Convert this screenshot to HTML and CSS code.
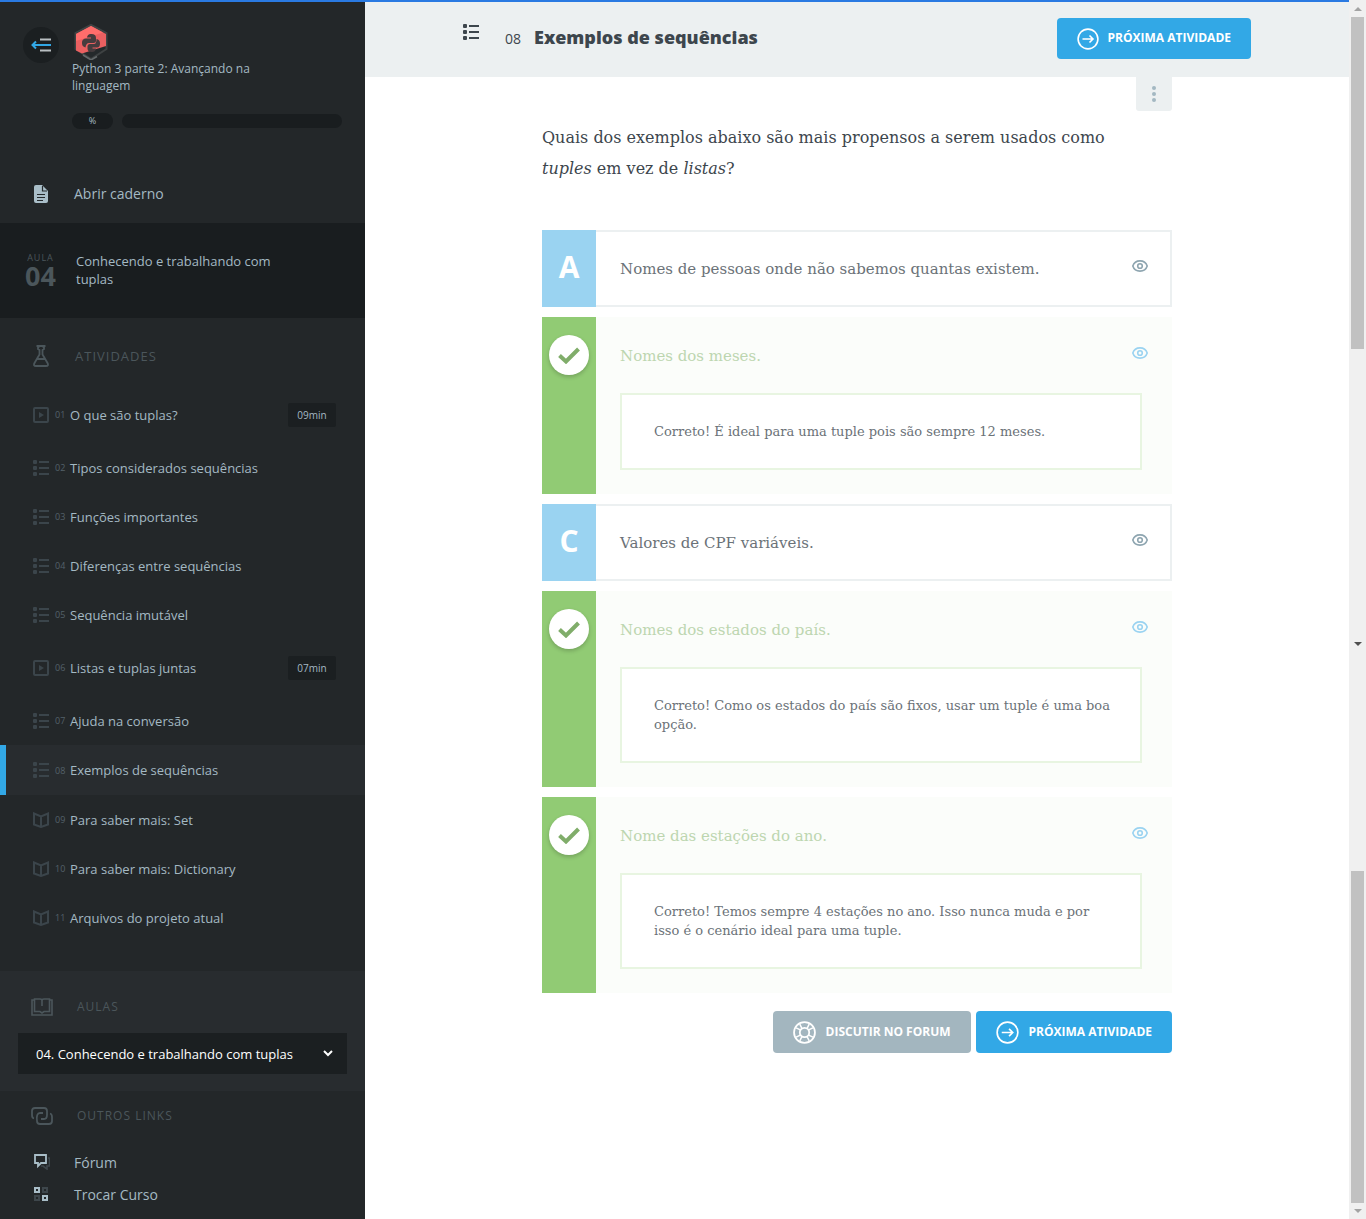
FILE: index.html
```html
<!DOCTYPE html>
<html lang="pt-BR">
<head>
<meta charset="utf-8">
<title>Exemplos de sequências</title>
<link rel="stylesheet" href="styles.css">
</head>
<body>
<svg class="sprite" aria-hidden="true">
  <symbol id="i-list" viewBox="0 0 16 16"><rect width="4" height="4" rx="1"/><rect y="6" width="4" height="4" rx="1"/><rect y="12" width="4" height="4" rx="1"/><rect x="6" y="1" width="10" height="2"/><rect x="6" y="7" width="10" height="2"/><rect x="6" y="13" width="10" height="2"/></symbol>
  <symbol id="i-video" viewBox="0 0 16 16"><rect x="1" y="1" width="14" height="14" rx="1" fill="none" stroke="currentColor" stroke-width="2"/><path d="M6 5l5 3-5 3z"/></symbol>
  <symbol id="i-book" viewBox="0 0 16 16"><path d="M1 1.500L8 4.500L15 1.500V12.500L8 15L1 12.500ZM8 4.500V15" fill="none" stroke="currentColor" stroke-width="2"/></symbol>
  <symbol id="i-eye" viewBox="0 0 16 12"><path d="M.8 6C3-.8 13-.8 15.200 6C13 12.800 3 12.800 .8 6Z" fill="none" stroke="currentColor" stroke-width="1.600"/><circle cx="8" cy="6" r="2.300" fill="none" stroke="currentColor" stroke-width="1.600"/></symbol>
  <symbol id="i-next" viewBox="0 0 22 22"><circle cx="11" cy="11" r="9.900" fill="none" stroke="currentColor" stroke-width="1.600"/><path d="M5.500 11H16M12.500 7.500L16 11L12.500 14.500" fill="none" stroke="currentColor" stroke-width="1.600"/></symbol>
  <symbol id="i-buoy" viewBox="0 0 22 22"><g fill="none" stroke="currentColor" stroke-width="1.700"><circle cx="11" cy="11" r="10"/><circle cx="11" cy="11" r="4.500"/><path d="M3 6.500L7 8.500M6.500 3L8.500 7M19 6.500L15 8.500M15.500 3L13.500 7M3 15.500L7 13.500M6.500 19L8.500 15M19 15.500L15 13.500M15.500 19L13.500 15" stroke-width="1.400"/></g></symbol>
  <symbol id="i-check" viewBox="0 0 22 17"><path d="M1.500 8.500L8 14.500L20.500 2" fill="none" stroke="currentColor" stroke-width="4"/></symbol>
</svg>

<div class="app">
  <div class="loading-bar"></div>
  <aside class="sidebar">
    <header class="course">
      <button class="collapse" aria-label="Recolher menu">
        <svg width="20" height="14" viewBox="0 0 20 14"><path d="M9 1.500H20M9 12.500H20" stroke="#b9bfc2" stroke-width="2"/><path d="M1 7H20M5 3.500L1.500 7L5 10.500" fill="none" stroke="#32a8e6" stroke-width="2"/></svg>
      </button>
      <div class="course-info">
        <svg class="course-logo" width="38" height="38" viewBox="0 0 38 38"><path d="M19 3L34.500 11V27L19 37L3.500 27V11Z" fill="#24292b" stroke="#3e4243" stroke-width="2"/><path d="M19 4L34 12V24L10 31.500L4 28.500V12Z" fill="#ea6061"/><path d="M19 4L31 10.500L4 19V12Z" fill="#ff6d6b"/><path d="M11 33L19 38L25 34.500" fill="none" stroke="#63696b" stroke-width="1.500"/><g fill="#453c3e"><path d="M13.500 25.500Q9.500 24.500 10 20Q10.500 16.500 14 16.500H19V15.500H15Q15.500 11.500 19.500 12Q24 12 24 16V18.500Q24 21 21.500 21H17Q14 21 13.500 25.500Z"/><path d="M24.500 17Q28 17.500 28 21.500Q28 25.500 25 25.500H20.500V26.500H24Q23.500 30 20 30Q15.500 30 15.500 26.500V24.500Q15.500 22 18 22H22Q24.500 22 24.500 17Z"/></g></svg>
        <a href="#" class="course-name">Python 3 parte 2: Avançando na linguagem</a>
        <div class="progress"><span class="percent">%</span><span class="track"></span></div>
      </div>
    </header>
    <a href="#" class="notebook">
      <svg width="14" height="18" viewBox="0 0 14 18"><path d="M0 2Q0 0 2 0H8L14 6V16Q14 18 12 18H2Q0 18 0 16Z" fill="#a9bec8"/><path d="M8.500 1V6H13M3 9.500H11M3 12.500H11M3 15.500H9" fill="none" stroke="#24292b" stroke-width="1.200"/></svg>
      <span>Abrir caderno</span>
    </a>
    <section class="lesson">
      <div class="lesson-number"><span>AULA</span><strong>04</strong></div>
      <h2>Conhecendo e trabalhando com tuplas</h2>
    </section>
    <nav class="activities">
      <h3 class="section-title"><svg width="16" height="22" viewBox="0 0 16 22"><path d="M3.500 1H12.500M5.500 1V3M10.500 1V3M5 1V4L6.500 5V9.500L1.500 18Q0 21 3 21H13Q16 21 14.500 18L9.500 9.500V5L11 4V1M4.500 14H11.500" fill="none" stroke="currentColor" stroke-width="1.800"/></svg><span>ATIVIDADES</span></h3>
      <ul>
        <li class="timed"><a href="#"><svg class="icon"><use href="#i-video"/></svg><small>01</small><span>O que são tuplas?</span><time>09min</time></a></li>
        <li><a href="#"><svg class="icon"><use href="#i-list"/></svg><small>02</small><span>Tipos considerados sequências</span></a></li>
        <li><a href="#"><svg class="icon"><use href="#i-list"/></svg><small>03</small><span>Funções importantes</span></a></li>
        <li><a href="#"><svg class="icon"><use href="#i-list"/></svg><small>04</small><span>Diferenças entre sequências</span></a></li>
        <li><a href="#"><svg class="icon"><use href="#i-list"/></svg><small>05</small><span>Sequência imutável</span></a></li>
        <li class="timed"><a href="#"><svg class="icon"><use href="#i-video"/></svg><small>06</small><span>Listas e tuplas juntas</span><time>07min</time></a></li>
        <li><a href="#"><svg class="icon"><use href="#i-list"/></svg><small>07</small><span>Ajuda na conversão</span></a></li>
        <li class="active"><a href="#" aria-current="page"><svg class="icon"><use href="#i-list"/></svg><small>08</small><span>Exemplos de sequências</span></a></li>
        <li><a href="#"><svg class="icon"><use href="#i-book"/></svg><small>09</small><span>Para saber mais: Set</span></a></li>
        <li><a href="#"><svg class="icon"><use href="#i-book"/></svg><small>10</small><span>Para saber mais: Dictionary</span></a></li>
        <li><a href="#"><svg class="icon"><use href="#i-book"/></svg><small>11</small><span>Arquivos do projeto atual</span></a></li>
      </ul>
    </nav>
    <section class="lessons">
      <label class="section-title" for="lesson"><svg width="22" height="18" viewBox="0 0 22 18"><path d="M3 2H1V17H21V2H19M3.500 1H9Q11 1 11 2.500Q11 1 13 1H18.500V13.500H13L11 15L9 13.500H3.500ZM11 2V8" fill="none" stroke="currentColor" stroke-width="1.600"/></svg><span>AULAS</span></label>
      <div class="select">
        <select id="lesson"><option>04. Conhecendo e trabalhando com tuplas</option></select>
        <svg width="10" height="7" viewBox="0 0 10 7"><path d="M1 1L5 5L9 1" fill="none" stroke="#fff" stroke-width="2"/></svg>
      </div>
    </section>
    <nav class="links">
      <h3 class="section-title"><svg width="22" height="18" viewBox="0 0 22 18"><path d="M3 11.500Q1 11 1 8V4Q1 1 4 1H13Q16 1 16 4V8Q16 12 13 12H10M6 14Q5 6 9 6H12M19 6.500Q21 7 21 10V14Q21 17 18 17H9Q6 17 6 14" fill="none" stroke="currentColor" stroke-width="1.800"/></svg><span>OUTROS LINKS</span></h3>
      <a href="#"><svg width="16" height="16" viewBox="0 0 16 16"><path d="M1 1H12V9H7L4 12V9H1Z" fill="none" stroke="#a9bec8" stroke-width="1.800"/><path d="M14 4H15.500V12H13V15L9 12H7" fill="none" stroke="#3e474c" stroke-width="1.600"/></svg><span>Fórum</span></a>
      <a href="#"><svg width="16" height="16" viewBox="0 0 16 16"><path d="M1 2H5V6H1ZM9 10H13V14H9Z" fill="none" stroke="#a9bec8" stroke-width="2"/><path d="M9 2H13V6H9ZM1 10H5V14H1Z" fill="none" stroke="#3e474c" stroke-width="2"/></svg><span>Trocar Curso</span></a>
    </nav>
  </aside>

  <main class="page">
    <header class="topbar">
      <div class="topbar-inner">
        <svg class="icon"><use href="#i-list"/></svg>
        <span class="number">08</span>
        <h1>Exemplos de sequências</h1>
        <a href="#" class="btn primary"><svg><use href="#i-next"/></svg><span>PRÓXIMA ATIVIDADE</span></a>
      </div>
    </header>
    <div class="content">
      <button class="more" aria-label="Mais opções"><i></i><i></i><i></i></button>
      <p class="question">Quais dos exemplos abaixo são mais propensos a serem usados como <em>tuples</em> em vez de <em>listas</em>?</p>
      <ol class="options">
        <li class="option">
          <button class="mark">A</button>
          <div class="body"><div class="answer"><p>Nomes de pessoas onde não sabemos quantas existem.</p><button class="eye" aria-label="Ver opinião"><svg><use href="#i-eye"/></svg></button></div></div>
        </li>
        <li class="option correct">
          <button class="mark" aria-label="B, correta"><span class="check"><svg><use href="#i-check"/></svg></span></button>
          <div class="body"><div class="answer"><p>Nomes dos meses.</p><button class="eye" aria-label="Ver opinião"><svg><use href="#i-eye"/></svg></button></div><p class="feedback">Correto! É ideal para uma tuple pois são sempre 12 meses.</p></div>
        </li>
        <li class="option">
          <button class="mark">C</button>
          <div class="body"><div class="answer"><p>Valores de CPF variáveis.</p><button class="eye" aria-label="Ver opinião"><svg><use href="#i-eye"/></svg></button></div></div>
        </li>
        <li class="option correct">
          <button class="mark" aria-label="D, correta"><span class="check"><svg><use href="#i-check"/></svg></span></button>
          <div class="body"><div class="answer"><p>Nomes dos estados do país.</p><button class="eye" aria-label="Ver opinião"><svg><use href="#i-eye"/></svg></button></div><p class="feedback">Correto! Como os estados do país são fixos, usar um tuple é uma boa opção.</p></div>
        </li>
        <li class="option correct">
          <button class="mark" aria-label="E, correta"><span class="check"><svg><use href="#i-check"/></svg></span></button>
          <div class="body"><div class="answer"><p>Nome das estações do ano.</p><button class="eye" aria-label="Ver opinião"><svg><use href="#i-eye"/></svg></button></div><p class="feedback">Correto! Temos sempre 4 estações no ano. Isso nunca muda e por isso é o cenário ideal para uma tuple.</p></div>
        </li>
      </ol>
      <div class="actions">
        <a href="#" class="btn muted"><svg><use href="#i-buoy"/></svg><span>DISCUTIR NO FORUM</span></a>
        <a href="#" class="btn primary"><svg><use href="#i-next"/></svg><span>PRÓXIMA ATIVIDADE</span></a>
      </div>
    </div>
  </main>
  <div class="scrollbars" aria-hidden="true">
    <div class="bar"><i class="up"></i><b></b><i class="down dark"></i></div>
    <div class="bar second"><b></b><i class="down"></i></div>
  </div>
</div>
</body>
</html>
```
FILE: styles.css
```css
* { box-sizing: border-box; }

body {
  margin: 0;
  background: #fff;
  font-family: "Open Sans", sans-serif;
  color: #3d464d;
}

h1, h2, h3, p, ul, ol { margin: 0; padding: 0; }
ul, ol { list-style: none; }
a { color: inherit; text-decoration: none; }
button { border: 0; padding: 0; font: inherit; cursor: pointer; }
svg { display: block; flex: none; fill: currentColor; }
.sprite { position: absolute; width: 0; height: 0; }
.icon { width: 16px; height: 16px; }

.app {
  display: grid;
  grid-template-columns: 365px 1fr 17px;
  grid-template-rows: 2px 1fr;
  min-height: 100vh;
}
.loading-bar { grid-column: 1 / 3; background: #2a7ae2; }
.scrollbars { grid-column: 3; grid-row: 1 / 3; }

/* Sidebar */
.sidebar { background: #232729; color: #a4b9c3; }

.course {
  display: flex;
  gap: 13px;
  height: 174px;
  padding: 20px 23px 0;
}
.collapse {
  display: grid;
  place-items: center;
  width: 36px;
  height: 36px;
  margin-top: 5px;
  border-radius: 50%;
  background: #1b1f21;
}
.course-info { flex: 1; }
.course-name { display: block; max-width: 200px; font-size: 12px; line-height: 17px; }
.progress { display: flex; align-items: center; gap: 9px; margin-top: 19px; }
.percent {
  width: 41px;
  border-radius: 8px;
  background: #191d1f;
  font-size: 9px;
  line-height: 16px;
  text-align: center;
}
.track { flex: 1; height: 14px; border-radius: 7px; background: #191d1f; }

.notebook {
  display: flex;
  align-items: center;
  gap: 26px;
  height: 47px;
  padding: 0 34px 12px;
  font-size: 14px;
}

.lesson {
  display: flex;
  gap: 19px;
  height: 95px;
  padding: 29px 24px;
  background: #191d1f;
}
.lesson-number { width: 33px; color: #4b565b; text-align: center; }
.lesson-number span { display: block; font-size: 9px; line-height: 12px; letter-spacing: 1px; }
.lesson-number strong { display: block; font-size: 27px; line-height: 24px; }
.lesson h2 { max-width: 220px; font-size: 13px; font-weight: 400; line-height: 18px; }

.section-title {
  display: flex;
  align-items: center;
  gap: 26px;
  color: #4b565b;
  font-size: 12px;
  font-weight: 400;
  line-height: 22px;
  letter-spacing: 1px;
}

.activities { height: 653px; padding-top: 27px; }
.activities .section-title { padding: 0 33px; margin-bottom: 19px; font-size: 13px; }
.activities a {
  display: flex;
  align-items: center;
  height: 49px;
  padding: 0 29px 0 33px;
  font-size: 13px;
}
.activities .timed a { height: 57px; }
.activities .active a {
  height: 50px;
  padding-left: 27px;
  border-left: 6px solid #32a8e6;
  background: #282c2f;
}
.activities .icon { color: #3b454b; }
.activities small { width: 15px; margin-left: 6px; font-size: 9px; color: #54616a; }
.activities time {
  margin-left: auto;
  width: 48px;
  border-radius: 2px;
  background: #1b1f21;
  font-size: 10px;
  line-height: 24px;
  text-align: center;
}

.lessons { height: 120px; padding: 25px 18px 0; background: #282c2f; }
.lessons .section-title { padding-left: 13px; margin-bottom: 15px; gap: 24px; }
.select { display: flex; align-items: center; height: 41px; background: #1b1f21; }
.select select {
  flex: 1;
  height: 41px;
  margin-right: -24px;
  padding: 0 34px 0 18px;
  border: 0;
  appearance: none;
  background: none;
  color: #fff;
  font: 13px "Open Sans", sans-serif;
}
.select svg { margin-right: 14px; }

.links { padding: 14px 31px 6px; }
.links .section-title { gap: 24px; margin-bottom: 19px; }
.links a { display: flex; align-items: center; gap: 24px; height: 32px; padding-left: 3px; font-size: 14px; }

/* Main column */
.page { min-width: 0; }
.topbar { height: 75px; padding: 0 16px; background: #ecf0f1; }
.topbar-inner { display: flex; align-items: center; max-width: 788px; height: 73px; margin: 0 auto; }
.topbar .icon { margin-bottom: 14px; }
.topbar .number { margin-left: 26px; font-size: 14px; }
.topbar h1 { margin: 0 0 3px 13px; font-size: 18px; font-weight: 800; }
.topbar .btn { margin-left: auto; }

.btn {
  display: flex;
  align-items: center;
  gap: 9px;
  height: 41px;
  padding: 0 20px;
  border-radius: 4px;
  color: #fff;
  font-size: 12px;
  font-weight: 700;
}
.btn svg { width: 22px; height: 22px; }
.btn span { padding-bottom: 2px; }
.primary { background: #32a8e6; }
.muted { background: #a3b6bf; }

.content {
  max-width: 630px;
  margin: 0 auto;
  font-family: "DejaVu Serif", serif;
}
.more {
  display: flex;
  flex-direction: column;
  align-items: center;
  justify-content: center;
  gap: 2px;
  width: 36px;
  height: 34px;
  margin-left: auto;
  border-radius: 0 0 3px 3px;
  background: #ecf0f1;
}
.more i { width: 4px; height: 4px; border-radius: 50%; background: #a3b8c2; }
.question { margin: 11px 0 46px; padding-right: 20px; font-size: 16px; line-height: 31px; }

.options { display: grid; gap: 10px; }
.option { display: flex; }
.mark {
  display: flex;
  justify-content: center;
  align-items: center;
  width: 54px;
  background: #9ad3f1;
  color: #fff;
  font: 700 30px "Open Sans", sans-serif;
  padding-bottom: 4px;
}
.body {
  flex: 1;
  padding: 0 22px 0 24px;
  border: 2px solid #ecf0f1;
  border-left: 0;
}
.answer {
  display: flex;
  align-items: center;
  justify-content: space-between;
  height: 73px;
  font-size: 15px;
  color: #6b7278;
}
.eye { margin-bottom: 6px; background: none; color: #8ea5b0; }
.eye svg { width: 16px; height: 12px; }

.correct .mark { align-items: flex-start; padding-top: 18px; background: #91cb74; }
.check {
  display: grid;
  place-items: center;
  width: 40px;
  height: 40px;
  border-radius: 50%;
  background: #fff;
  color: #80ad6a;
  box-shadow: 0 2px 4px rgba(0, 0, 0, .2);
}
.check svg { width: 22px; height: 17px; }
.correct .body { border-color: #fbfdfa; background: #fbfdfa; }
.correct .answer { height: 74px; color: #bdd6b0; }
.correct .eye { color: #9ad3f1; }
.feedback {
  margin: 0 6px 22px 0;
  padding: 27px 26px 27px 32px;
  border: 2px solid #e8f5e1;
  background: #fff;
  color: #6b7278;
  font-size: 13px;
  line-height: 19px;
}

.actions { display: flex; justify-content: flex-end; gap: 5px; margin: 18px 0 40px; font-family: "Open Sans", sans-serif; }
.actions .btn { height: 42px; gap: 10px; }
.actions svg { width: 23px; height: 23px; }

/* Scrollbars of the outer and inner frames */
.scrollbars { display: grid; grid-template-rows: 652fr 567fr; background: #f0f0f0; }
.bar { display: flex; flex-direction: column; align-items: center; padding: 7px 0 6px; }
.bar b { width: 13px; height: 332px; margin-top: 6px; background: #c1c1c1; }
.bar i { border: 4px solid transparent; border-top: 0; border-bottom: 4px solid #a3a3a3; }
.bar .down { margin-top: auto; border-top: 4px solid #a3a3a3; border-bottom: 0; }
.bar .dark { border-top-color: #505050; }
.second b { margin-top: auto; }
.second .down { margin-top: 6px; }
```
